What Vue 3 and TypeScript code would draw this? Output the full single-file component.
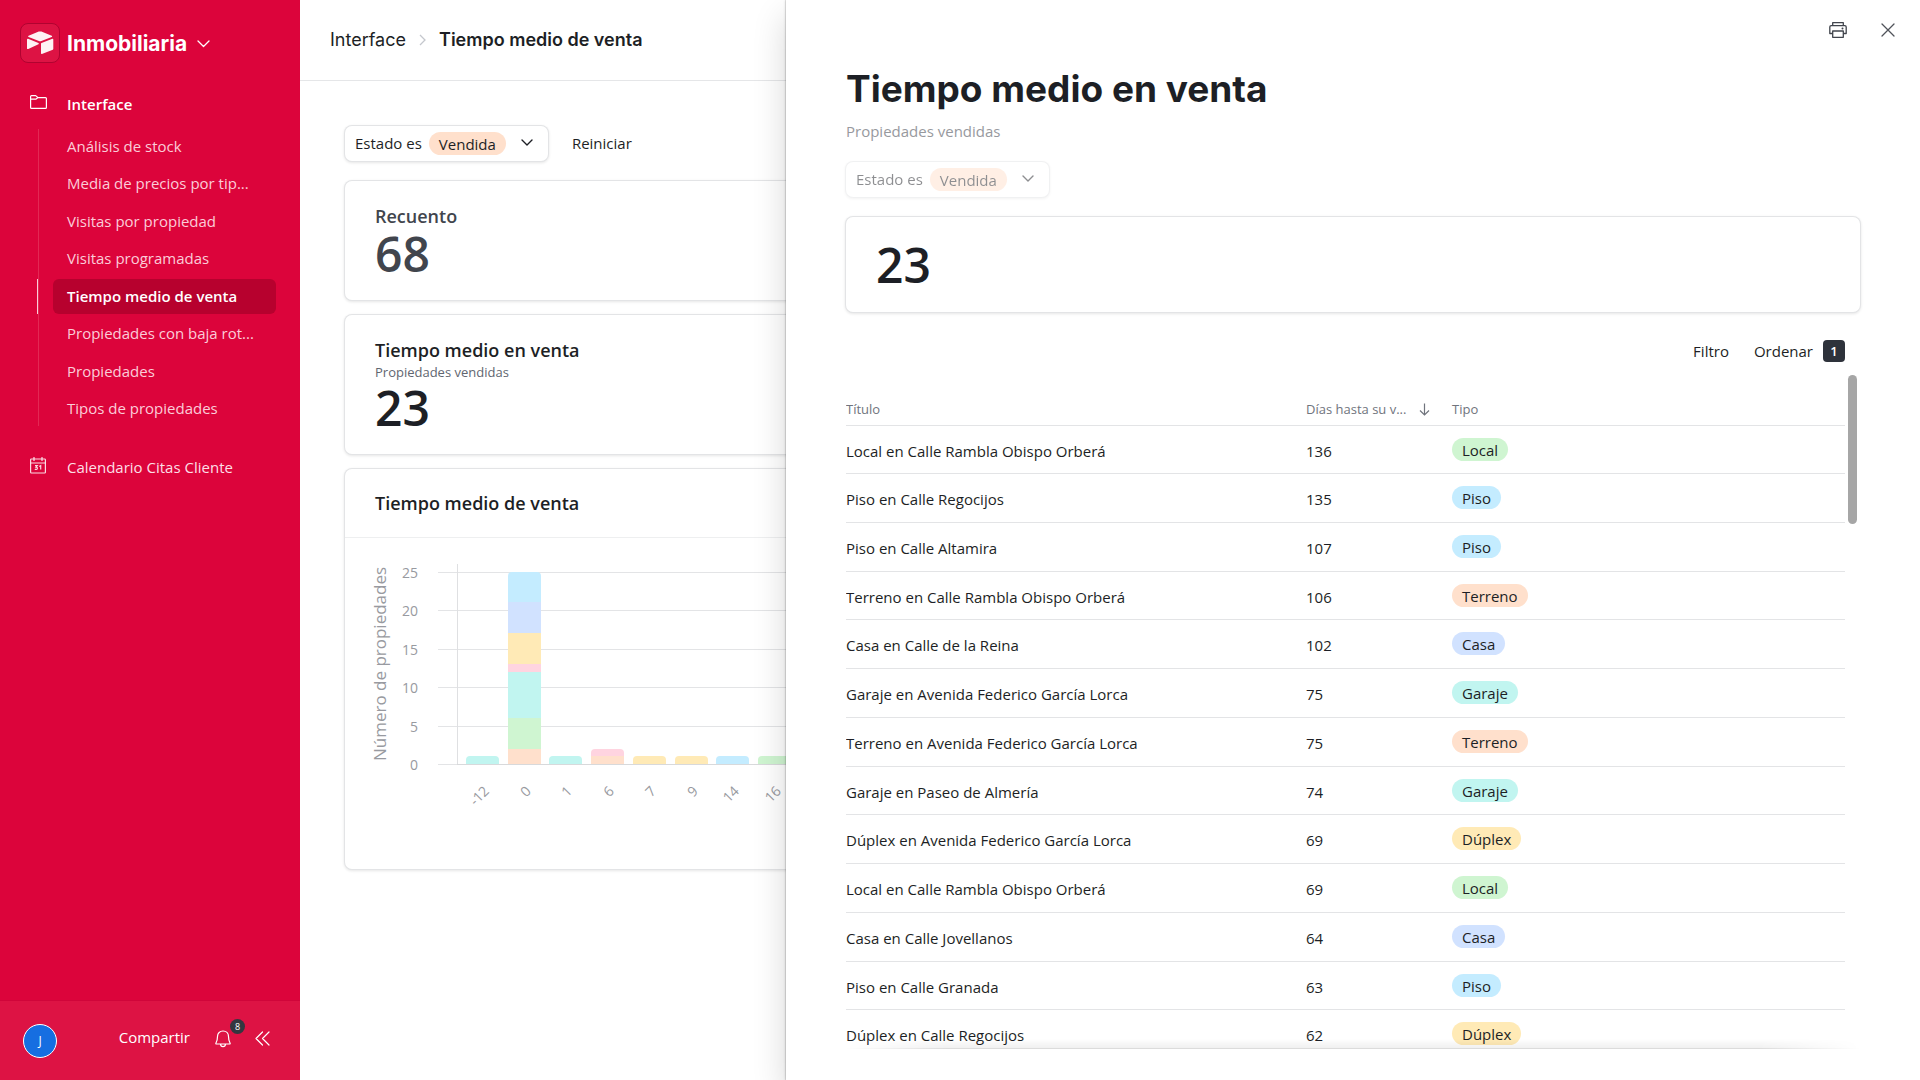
<script setup lang="ts">
interface NavItem {
  label: string
  active?: boolean
}

interface Property {
  title: string
  days: number
  type: string
}

interface Segment {
  type: string
  count: number
}

interface Column {
  label: string
  segments: Segment[]
}

const navItems: NavItem[] = [
  { label: 'Análisis de stock' },
  { label: 'Media de precios por tip...' },
  { label: 'Visitas por propiedad' },
  { label: 'Visitas programadas' },
  { label: 'Tiempo medio de venta', active: true },
  { label: 'Propiedades con baja rot...' },
  { label: 'Propiedades' },
  { label: 'Tipos de propiedades' },
]

const properties: Property[] = [
  { title: 'Local en Calle Rambla Obispo Orberá', days: 136, type: 'Local' },
  { title: 'Piso en Calle Regocijos', days: 135, type: 'Piso' },
  { title: 'Piso en Calle Altamira', days: 107, type: 'Piso' },
  { title: 'Terreno en Calle Rambla Obispo Orberá', days: 106, type: 'Terreno' },
  { title: 'Casa en Calle de la Reina', days: 102, type: 'Casa' },
  { title: 'Garaje en Avenida Federico García Lorca', days: 75, type: 'Garaje' },
  { title: 'Terreno en Avenida Federico García Lorca', days: 75, type: 'Terreno' },
  { title: 'Garaje en Paseo de Almería', days: 74, type: 'Garaje' },
  { title: 'Dúplex en Avenida Federico García Lorca', days: 69, type: 'Dúplex' },
  { title: 'Local en Calle Rambla Obispo Orberá', days: 69, type: 'Local' },
  { title: 'Casa en Calle Jovellanos', days: 64, type: 'Casa' },
  { title: 'Piso en Calle Granada', days: 63, type: 'Piso' },
  { title: 'Dúplex en Calle Regocijos', days: 62, type: 'Dúplex' },
]

const typeColors: Record<string, string> = {
  Local: '#cff5d1',
  Piso: '#c4ecff',
  Terreno: '#ffe0cc',
  Casa: '#d1e2ff',
  Garaje: '#c1f5f0',
  Dúplex: '#ffeab6',
  Oficina: '#ffd4e0',
}

const columns: Column[] = [
  { label: '-12', segments: [{ type: 'Garaje', count: 1 }] },
  {
    label: '0',
    segments: [
      { type: 'Terreno', count: 2 },
      { type: 'Local', count: 4 },
      { type: 'Garaje', count: 6 },
      { type: 'Oficina', count: 1 },
      { type: 'Dúplex', count: 4 },
      { type: 'Casa', count: 4 },
      { type: 'Piso', count: 4 },
    ],
  },
  { label: '1', segments: [{ type: 'Garaje', count: 1 }] },
  {
    label: '6',
    segments: [
      { type: 'Terreno', count: 1 },
      { type: 'Oficina', count: 1 },
    ],
  },
  { label: '7', segments: [{ type: 'Dúplex', count: 1 }] },
  { label: '9', segments: [{ type: 'Dúplex', count: 1 }] },
  { label: '14', segments: [{ type: 'Piso', count: 1 }] },
  { label: '16', segments: [{ type: 'Local', count: 1 }] },
]

// Chart geometry, in pixels of the plot's own space
const baseline = 227
const unit = 7.7
const barWidth = 33
const barPitch = 41.7
const firstBar = 121

const ticks = [25, 20, 15, 10, 5, 0].map((value) => ({
  value,
  y: Math.round(baseline - value * unit),
}))

const radius = 4

function barPath(x: number, top: number, height: number, rounded: boolean): string {
  const right = x + barWidth
  const bottom = top + height
  if (!rounded) return `M${x} ${top}H${right}V${bottom}H${x}Z`
  return `M${x} ${bottom}V${top + radius}Q${x} ${top} ${x + radius} ${top}H${right - radius}Q${right} ${top} ${right} ${top + radius}V${bottom}Z`
}

const bars = columns.map((column, index) => {
  const x = Math.round(firstBar + index * barPitch)
  let total = 0
  const parts = column.segments.map((segment, i) => {
    const bottom = Math.round(baseline - total * unit)
    total += segment.count
    const top = Math.round(baseline - total * unit)
    return {
      d: barPath(x, top, bottom - top, i === column.segments.length - 1),
      color: typeColors[segment.type],
    }
  })
  return { label: column.label, labelX: x + 24, parts }
})
</script>

<template>
  <div class="app">
    <aside class="sidebar">
      <button class="brand" type="button">
        <span class="logo">
          <svg width="28" height="24" viewBox="0 0 28 24" aria-hidden="true">
            <path d="M12.8 .6 2.6 4.7c-.6.3-.6 1 0 1.300l10.300 4c.8.3 1.700.3 2.500 0l10.300-4c.6-.3.6-1 0-1.300L15.400.6c-.8-.3-1.700-.3-2.600 0Z" fill="#fff" fill-opacity=".95" />
            <path d="M15 12.700v9.600c0 .5.500.8.900.6l10.900-4.200c.3-.1.500-.4.500-.6V8.400c0-.5-.5-.8-.9-.6L15.500 12c-.3.1-.5.4-.5.700Z" fill="#fff" fill-opacity=".95" />
            <path d="m12.500 13.200-3.300 1.500-6.900 3.300c-.5.200-1.300-.1-1.300-.6V8.500c0-.5.600-.9 1.100-.7l10.300 4.300c.5.200.6.900.1 1.100Z" fill="#fff" fill-opacity=".95" />
          </svg>
        </span>
        <span class="brand-name">Inmobiliaria</span>
        <svg class="brand-caret" width="13" height="8" viewBox="0 0 13 8" aria-hidden="true">
          <path d="m1 1 5.500 5.500L12 1" fill="none" stroke="#fff" stroke-width="1.300" stroke-linecap="round" stroke-linejoin="round" />
        </svg>
      </button>

      <nav class="nav">
        <a class="nav-top nav-open" href="#interface">
          <span class="nav-icon">
            <svg width="17" height="14" viewBox="0 0 17 14" aria-hidden="true">
              <path d="M.6 4.200V1.500c0-.5.400-.9.900-.9h4.200L8 2.600h7.500c.5 0 .9.400.9.900v9c0 .5-.4.900-.9.900h-14c-.5 0-.9-.4-.9-.9V4.200h5.200L8 2.600" fill="none" stroke="#fff" stroke-width="1.200" stroke-linejoin="round" />
            </svg>
          </span>
          Interface
        </a>
        <ul class="nav-list">
          <li v-for="item in navItems" :key="item.label">
            <a class="nav-item" :class="{ active: item.active }" href="#page">{{ item.label }}</a>
          </li>
        </ul>
        <a class="nav-top" href="#calendario">
          <span class="nav-icon">
            <svg width="16" height="17" viewBox="0 0 16 17" aria-hidden="true">
              <g fill="none" stroke="#fff" stroke-opacity=".85" stroke-width="1.200">
                <rect x=".6" y="2" width="14.800" height="14" rx=".8" />
                <path d="M.6 6h14.800M4 0v4M12 0v4" />
                <path d="M5 8.700h2.300L6 10.200c1.300 0 1.600.7 1.300 1.500-.4.900-1.700 1-2.400.3M9.200 9.500l1.500-.9v4" />
              </g>
            </svg>
          </span>
          Calendario Citas Cliente
        </a>
      </nav>

      <footer class="side-footer">
        <button class="avatar" type="button" aria-label="Cuenta">J</button>
        <button class="share" type="button">Compartir</button>
        <button class="bell" type="button" aria-label="Notificaciones">
          <svg width="16" height="18" viewBox="0 0 16 18" aria-hidden="true">
            <path d="M2.500 6.500C2.500 3.300 4.900 1 8 1s5.500 2.300 5.500 5.500c0 3.300.7 5.200 1.600 6.700.2.400 0 .8-.4.800H1.300c-.4 0-.6-.4-.4-.8.9-1.500 1.600-3.400 1.600-6.700ZM5.500 14c.1 1.700 1 2.700 2.500 2.700s2.400-1 2.500-2.700" fill="none" stroke="#fff" stroke-width="1.200" />
          </svg>
          <span class="bell-count">8</span>
        </button>
        <button class="collapse" type="button" aria-label="Contraer">
          <svg width="15" height="15" viewBox="0 0 15 15" aria-hidden="true">
            <path d="M7.500 1 1 7.500 7.500 14M14 1 7.500 7.500 14 14" fill="none" stroke="#fff" stroke-width="1.200" stroke-linecap="round" stroke-linejoin="round" />
          </svg>
        </button>
      </footer>
    </aside>

    <main class="main">
      <header class="crumbs">
        <a href="#interface">Interface</a>
        <svg width="7" height="12" viewBox="0 0 7 12" aria-hidden="true">
          <path d="m1 1 5 5-5 5" fill="none" stroke="#c4c7cd" stroke-width="1.300" />
        </svg>
        <strong>Tiempo medio de venta</strong>
      </header>

      <div class="content">
        <div class="filters">
          <button class="filter" type="button">
            Estado es
            <span class="pill filter-pill">Vendida</span>
            <svg width="12" height="8" viewBox="0 0 12 8" aria-hidden="true">
              <path d="m1 1 5 5 5-5" fill="none" stroke="#1d1f25" stroke-width="1.400" stroke-linecap="round" stroke-linejoin="round" />
            </svg>
          </button>
          <button class="plain" type="button">Reiniciar</button>
        </div>

        <section class="card stat muted">
          <h2>Recuento</h2>
          <div class="number">68</div>
        </section>

        <section class="card stat">
          <h2>Tiempo medio en venta</h2>
          <p>Propiedades vendidas</p>
          <div class="number">23</div>
        </section>

        <section class="card">
          <div class="chart-head">
            <h2>Tiempo medio de venta</h2>
          </div>
          <svg class="chart" role="img" aria-label="Tiempo medio de venta">
            <text class="axis-title" transform="translate(41 127) rotate(-90)" text-anchor="middle">Número de propiedades</text>
            <g v-for="tick in ticks" :key="tick.value">
              <text class="tick" x="73" :y="tick.y + 6" text-anchor="end">{{ tick.value }}</text>
              <line x1="93" x2="100%" :y1="tick.y + 0.5" :y2="tick.y + 0.5" stroke="#e3e4e6" />
            </g>
            <line x1="112.500" x2="112.500" y1="27" y2="228" stroke="#dfe0e2" />
            <g v-for="bar in bars" :key="bar.label">
              <path v-for="(part, i) in bar.parts" :key="i" :d="part.d" :fill="part.color" />
              <text class="tick" :transform="`translate(${bar.labelX} 255) rotate(-45)`" text-anchor="end">{{ bar.label }}</text>
            </g>
            <line x1="112" x2="100%" y1="227.500" y2="227.500" stroke="#d8d9db" />
          </svg>
        </section>
      </div>

      <section class="drawer" role="dialog" aria-labelledby="drawer-title">
        <div class="drawer-actions">
          <button class="icon-button" type="button" aria-label="Imprimir">
            <svg width="18" height="16" viewBox="0 0 18 16" aria-hidden="true">
              <g fill="none" stroke="#40444c" stroke-width="1.300" stroke-linejoin="round">
                <path d="M3.700 3.700V.7h10.600v3M3.700 11.500H.8V5c0-.8.600-1.300 1.400-1.300h13.600c.8 0 1.400.5 1.400 1.300v6.500h-2.900" />
                <path d="M3.700 9h10.600v6.300H3.700z" />
              </g>
              <circle cx="13.500" cy="6.600" r="1" fill="#40444c" />
            </svg>
          </button>
          <button class="icon-button" type="button" aria-label="Cerrar">
            <svg width="14" height="14" viewBox="0 0 14 14" aria-hidden="true">
              <path d="m1 1 12 12M13 1 1 13" fill="none" stroke="#50535a" stroke-width="1.300" stroke-linecap="round" />
            </svg>
          </button>
        </div>

        <div class="drawer-body">
          <h1 id="drawer-title">Tiempo medio en venta</h1>
          <p class="subtitle">Propiedades vendidas</p>

          <div class="filters">
            <button class="filter" type="button" disabled>
              Estado es
              <span class="pill filter-pill">Vendida</span>
              <svg width="12" height="8" viewBox="0 0 12 8" aria-hidden="true">
                <path d="m1 1 5 5 5-5" fill="none" stroke="#1d1f25" stroke-width="1.400" stroke-linecap="round" stroke-linejoin="round" />
              </svg>
            </button>
          </div>

          <div class="card summary">
            <div class="number">23</div>
          </div>

          <div class="tools">
            <button class="plain" type="button">Filtro</button>
            <button class="plain" type="button">Ordenar <span class="sort-count">1</span></button>
          </div>

          <div class="table-area">
            <table>
              <colgroup>
                <col class="col-title" />
                <col class="col-days" />
                <col />
              </colgroup>
              <thead>
                <tr>
                  <th scope="col">Título</th>
                  <th scope="col">
                    <span class="sorted">
                      Días hasta su v...
                      <svg width="11" height="13" viewBox="0 0 11 13" aria-hidden="true">
                        <path d="M5.500.5V12M1 7.500 5.500 12 10 7.500" fill="none" stroke="#70747d" stroke-width="1.200" />
                      </svg>
                    </span>
                  </th>
                  <th scope="col">Tipo</th>
                </tr>
              </thead>
              <tbody>
                <tr v-for="(property, i) in properties" :key="i">
                  <td>{{ property.title }}</td>
                  <td>{{ property.days }}</td>
                  <td>
                    <span class="pill" :style="{ backgroundColor: typeColors[property.type] }">{{ property.type }}</span>
                  </td>
                </tr>
              </tbody>
            </table>
            <span class="scroll-thumb"></span>
            <span class="fade"></span>
          </div>
        </div>
      </section>
    </main>
  </div>
</template>

<style>
body {
  margin: 0;
}
</style>

<style scoped>
.app {
  display: flex;
  height: 100vh;
  overflow: hidden;
  color: #1d1f25;
  background: #fff;
  font-family: 'Open Sans', 'Noto Sans', sans-serif;
  font-size: 15px;
  line-height: 20px;
}

.app * {
  box-sizing: border-box;
}

button {
  padding: 0;
  border: 0;
  background: none;
  color: inherit;
  font: inherit;
}

a {
  color: inherit;
  text-decoration: none;
}

h1,
h2,
p,
ul {
  margin: 0;
  padding: 0;
}

svg {
  display: block;
  flex: none;
}

/* Sidebar */
.sidebar {
  display: flex;
  flex: none;
  flex-direction: column;
  width: 300px;
  color: #fff;
  background: #dc043b;
}

.brand {
  display: flex;
  align-items: center;
  margin: 23px 20px 0;
}

.logo {
  display: flex;
  align-items: center;
  justify-content: center;
  width: 40px;
  height: 40px;
  border: 1px solid #b00330;
  border-radius: 8px;
  background: #dd1344;
}

.brand-name {
  margin-left: 7px;
  padding-top: 2px;
  font: 700 21px/24px Inter, sans-serif;
}

.brand-caret {
  margin: 2px 0 0 10px;
}

.nav {
  display: flex;
  flex: 1;
  flex-direction: column;
  margin-top: 23px;
}

.nav-top {
  display: flex;
  align-items: center;
  height: 35px;
  color: #fcdfe6;
}

.nav-open {
  color: #fff;
  font-weight: 600;
}

.nav-icon {
  display: flex;
  justify-content: center;
  width: 76px;
  margin-right: -9px;
  padding-bottom: 3px;
}

.nav-list {
  display: flex;
  flex-direction: column;
  justify-content: space-between;
  height: 297px;
  margin: 8px 24px 23px 38px;
  border-left: 1px solid #e32854;
  list-style: none;
}

.nav-item {
  position: relative;
  display: block;
  height: 35px;
  margin-left: 14px;
  padding-left: 14px;
  border-radius: 6px;
  color: #fbccd8;
  line-height: 35px;
}

.nav-item.active {
  background: #b7012e;
  color: #fff;
  font-weight: 600;
}

.nav-item.active::before {
  position: absolute;
  top: 0;
  bottom: 0;
  left: -16px;
  width: 1px;
  background: #fbccd8;
  content: '';
}

.side-footer {
  display: flex;
  align-items: center;
  height: 79px;
  padding: 0 30px 5px 23px;
  background: #dd1344;
  box-shadow: 0 -1px 0 #d0053a;
}

.avatar {
  width: 34px;
  height: 34px;
  margin-top: 5px;
  border: 1px solid #fff;
  border-radius: 50%;
  background: #166ee1;
  font-size: 12px;
}

.share {
  margin-left: auto;
  padding-bottom: 2px;
}

.bell {
  position: relative;
  margin: 2px 24px 0 25px;
}

.bell-count {
  position: absolute;
  top: -11px;
  left: 15px;
  width: 15px;
  height: 15px;
  border-radius: 50%;
  background: #333740;
  font-size: 9px;
  line-height: 15px;
  text-align: center;
}

/* Main page */
.main {
  position: relative;
  flex: 1;
  min-width: 0;
}

.crumbs {
  display: flex;
  align-items: center;
  gap: 13px;
  height: 81px;
  padding: 0 30px;
  border-bottom: 1px solid #e5e6e8;
  font: 400 18px/24px Inter, sans-serif;
}

.crumbs strong {
  font-weight: 600;
}

.content {
  display: flex;
  flex-direction: column;
  gap: 15px;
  padding: 45px;
}

.filters {
  display: flex;
  align-items: center;
  gap: 24px;
  margin-bottom: 5px;
}

.filter,
.card {
  border-radius: 7px;
  background: #fff;
  box-shadow: 0 0 0 1px #e3e4e6, 0 1px 3px 1px rgba(0, 0, 0, 0.1);
}

.filter {
  display: flex;
  align-items: center;
  height: 35px;
  padding: 0 15px 1px 10px;
}

.filters .plain {
  padding-bottom: 1px;
}

.filter:disabled {
  opacity: 0.5;
}

.pill {
  display: inline-block;
  height: 23px;
  padding: 0 10px;
  border-radius: 12px;
  line-height: 24px;
}

.filter-pill {
  margin: 0 15px 0 7px;
  background: #ffe0cc;
}

h2 {
  font-size: 18px;
  font-weight: 600;
  line-height: 24px;
}

.stat {
  padding: 23px 30px 20px;
}

.stat p {
  color: #616670;
  font-size: 13px;
}

.muted {
  color: #41454d;
}

.number {
  font-size: 48px;
  font-weight: 600;
  line-height: 52px;
}

.chart-head {
  height: 69px;
  padding: 22px 30px;
  border-bottom: 1px solid #eeeff0;
}

.chart {
  width: 100%;
  height: 332px;
  margin-top: -1px;
}

.tick {
  fill: #989aa0;
  font-size: 14px;
}

.axis-title {
  fill: #989aa0;
  font-size: 17px;
}

/* Drawer over the page */
.drawer {
  position: absolute;
  top: 0;
  right: 0;
  bottom: 0;
  display: flex;
  flex-direction: column;
  width: 70%;
  background: #fff;
  box-shadow: 0 0 1px rgba(0, 0, 0, 0.5), 0 0 3px rgba(0, 0, 0, 0.2), 0 16px 32px rgba(0, 0, 0, 0.16);
}

.drawer-actions {
  display: flex;
  justify-content: flex-end;
  gap: 20px;
  height: 60px;
  padding: 15px 17px;
}

.icon-button {
  display: flex;
  align-items: center;
  justify-content: center;
  width: 30px;
  height: 30px;
}

.drawer-body {
  display: flex;
  flex: 1;
  flex-direction: column;
  min-height: 0;
  padding: 0 60px 31px;
}

h1 {
  padding: 5px 0;
  font: 700 37px/48px Inter, sans-serif;
}

.subtitle {
  margin: 3px 0 21px;
  color: #97999e;
}

.drawer .filters {
  margin-bottom: 20px;
}

.summary {
  padding: 22px 30px 21px;
}

.tools {
  display: flex;
  justify-content: flex-end;
  gap: 25px;
  margin: 27px 15px 13px 0;
}

.tools .plain {
  display: flex;
  align-items: center;
  gap: 10px;
  height: 23px;
}

.sort-count {
  width: 22px;
  height: 22px;
  border-radius: 4px;
  background: #2e323b;
  color: #fff;
  font-size: 13px;
  font-weight: 600;
  line-height: 22px;
  text-align: center;
}

.table-area {
  position: relative;
  flex: 1;
  min-height: 0;
  overflow: hidden;
}

table {
  width: calc(100% - 15px);
  border-collapse: separate;
  border-spacing: 0;
  table-layout: fixed;
}

.col-title {
  width: 460px;
}

.col-days {
  width: 146px;
}

th,
td {
  height: 49px;
  padding: 0;
  border-bottom: 1px solid #e3e4e6;
  text-align: left;
}

tbody tr:first-child td,
tbody tr:nth-child(4n) td {
  height: 48px;
}

td {
  padding-top: 2px;
}

td .pill {
  margin-bottom: 3px;
  vertical-align: middle;
}

th {
  height: 51px;
  padding-top: 18px;
  color: #70747d;
  font-size: 13px;
  font-weight: 400;
}

.sorted {
  display: flex;
  align-items: center;
  justify-content: space-between;
  padding-right: 22px;
}

.scroll-thumb {
  position: absolute;
  top: 0;
  right: 3px;
  width: 9px;
  height: 149px;
  border-radius: 5px;
  background: #a6a6a6;
}

.fade {
  position: absolute;
  right: 0;
  bottom: 0;
  left: 0;
  height: 10px;
  border-bottom: 1px solid #dcdcdc;
  background: linear-gradient(transparent, rgba(0, 0, 0, 0.06));
  mask-image: linear-gradient(90deg, transparent, #000 10%, #000 90%, transparent);
}
</style>
